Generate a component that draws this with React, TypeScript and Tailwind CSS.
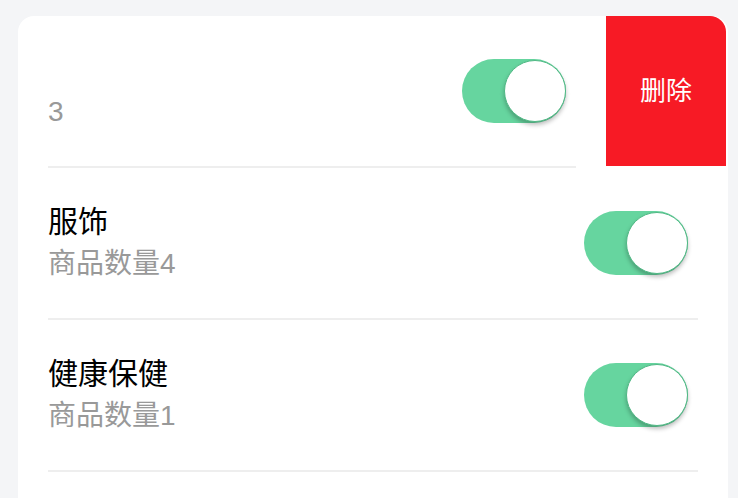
import { useState } from "react";

const ROWS = [
  { id: 1, name: "", count: "3", swiped: true },
  { id: 2, name: "服饰", count: "商品数量4", swiped: false },
  { id: 3, name: "健康保健", count: "商品数量1", swiped: false },
];

function Toggle({ on }: { on: boolean }) {
  return (
    <div
      className={`relative mr-[10px] h-[64px] w-[104px] shrink-0 rounded-full ${on ? "bg-[#66d59f]" : "bg-gray-200"}`}
    >
      <div
        className={`absolute top-[1px] h-[62px] w-[62px] rounded-full border border-[#4fb884] bg-white shadow-[0_3px_4px_rgba(0,0,0,0.25)] ${on ? "right-0" : "left-0"}`}
      />
    </div>
  );
}

export default function App() {
  const [rows] = useState(ROWS);

  return (
    <div
      className="flex h-[498px] flex-col overflow-hidden bg-[#f4f5f7] pl-[18px] pr-[10px] pt-4"
      style={{ fontFamily: '"Liberation Sans", "Noto Sans CJK SC", sans-serif' }}
    >
      <div className="flex-1 overflow-hidden rounded-t-2xl bg-white">
        {rows.map(r => (
          <div key={r.id} className="flex">
            <div className="flex-1 pl-[30px] pr-[30px]">
              <div className="flex h-[152px] items-center border-b-2 border-[#eeeeee]">
                <div className="flex-1">
                  <p className="h-[42px] text-[30px] leading-[42px] text-black">{r.name}</p>
                  <p className="text-[28px] leading-[42px] text-[#999999]">{r.count}</p>
                </div>
                <Toggle on />
              </div>
            </div>
            {r.swiped && (
              <button className="mr-[2px] flex h-[150px] w-[120px] shrink-0 items-center justify-center rounded-tr-2xl bg-[#f71a25] text-[26px] text-white">
                删除
              </button>
            )}
          </div>
        ))}
      </div>
    </div>
  );
}
